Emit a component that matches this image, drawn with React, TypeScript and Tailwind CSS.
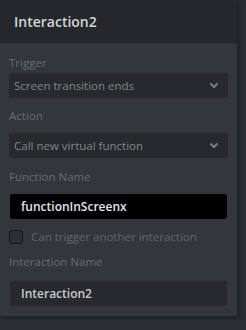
import React from 'react';

const Chevron = () => (
  <svg width="10" height="7" viewBox="0 0 10 7" className="text-[#7b7f86]">
    <path d="M1.5 1.5 L5 5 L8.5 1.5" fill="none" stroke="currentColor" strokeWidth={2} />
  </svg>
);

const Label = ({ children }: { children: React.ReactNode }) => (
  <div className="text-[11.5px] leading-[16px] text-[#696d73] px-[9px]">{children}</div>
);

const Select = ({ value }: { value: string }) => (
  <div className="mx-[9px] h-[25px] rounded-[3px] bg-[#27292d] flex items-center justify-between pl-[5px] pr-[9px]">
    <span className="text-[11.5px] text-[#82868c]">{value}</span>
    <Chevron />
  </div>
);

export default function App() {
  return (
    <div className="w-[246px] h-[330px] bg-[#2b2e32] font-['Open_Sans',sans-serif]">
      <div className="w-[237px] h-[316px] bg-[#33363b] shadow-[2px_2px_4px_rgba(0,0,0,0.35)] rounded-tr-[3px] overflow-hidden">
        {/* Header */}
        <div className="h-[43px] bg-[#25272b] flex items-center px-[14px]">
          <span className="text-[14px] font-semibold text-[#d2d5da]">Interaction2</span>
        </div>

        <div className="pt-[12px]">
          <Label>Trigger</Label>
          <div className="mt-[2px]">
            <Select value="Screen transition ends" />
          </div>

          <div className="mt-[10px]">
            <Label>Action</Label>
          </div>
          <div className="mt-[9px]">
            <Select value="Call new virtual function" />
          </div>

          <div className="mt-[11px]">
            <Label>Function Name</Label>
          </div>
          <div className="mt-[9px] mx-[10px] h-[25px] rounded-[3px] bg-black flex items-center pl-[11px]">
            <span className="text-[12px] font-semibold text-[#e3e5e8]">functionInScreenx</span>
          </div>

          <div className="mt-[10px] px-[9px] flex items-center gap-[8px]">
            <div className="w-[14px] h-[14px] rounded-[3px] border border-[#17181b] bg-[#2c2f33]" />
            <span className="text-[11.5px] leading-[16px] text-[#62666c]">Can trigger another interaction</span>
          </div>

          <div className="mt-[9px]">
            <Label>Interaction Name</Label>
          </div>
          <div className="mt-[11px] mx-[10px] h-[25px] rounded-[3px] bg-[#27292d] flex items-center pl-[11px]">
            <span className="text-[12px] font-semibold text-[#c9ccd2]">Interaction2</span>
          </div>
        </div>
      </div>
    </div>
  );
}
